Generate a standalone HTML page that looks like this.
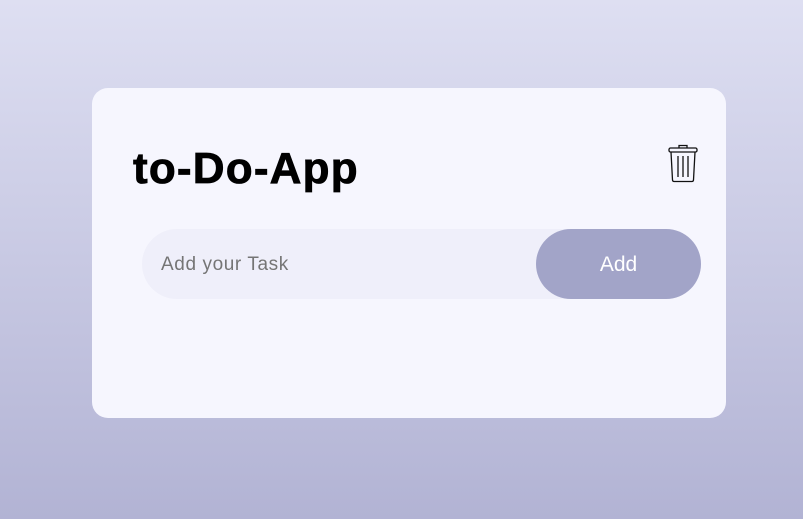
<!DOCTYPE html>
<html><head><style>
html,body{margin:0;padding:0;width:803px;height:519px;overflow:hidden}
body{background:linear-gradient(180deg,#dedff2 0%,#b2b3d4 100%);font-family:"Liberation Sans",sans-serif;position:relative}
.card{position:absolute;left:92px;top:88px;width:634px;height:330px;background:#f6f6fe;border-radius:16px}
h1{position:absolute;left:133px;top:144px;margin:0;font-size:44px;font-weight:bold;color:#000;letter-spacing:1.2px;line-height:50px;-webkit-text-stroke:0.8px #000}
.inp{position:absolute;left:142px;top:229px;width:559px;height:70px;background:#efeffa;border-radius:35px}
.ph{position:absolute;left:161px;top:254px;font-size:19px;letter-spacing:0.6px;color:#757575}
.btn{position:absolute;left:536px;top:230px;width:165px;height:70px;background:#a2a4c8;border-radius:35px;color:#fff;font-size:21px;text-align:center;line-height:70px}
svg{position:absolute;left:666px;top:143px}
</style></head><body>
<div class="card"></div>
<h1>to-Do-App</h1>
<div class="inp"></div>
<div class="ph">Add your Task</div>
<div class="btn" style="top:229px;line-height:72px">Add</div>
<svg width="34" height="40" viewBox="0 0 34 40" fill="none" stroke="#111" stroke-width="1.3">
<path d="M13 5 V2.5 H21 V5"/>
<rect x="3" y="5" width="28" height="4" rx="1.5"/>
<path d="M5 9 L6.5 37 Q6.7 38.5 8 38.5 H26 Q27.3 38.5 27.5 37 L29 9"/>
<path d="M12 13 V34 M17 13 V34 M22 13 V34"/>
</svg>
</body></html>
